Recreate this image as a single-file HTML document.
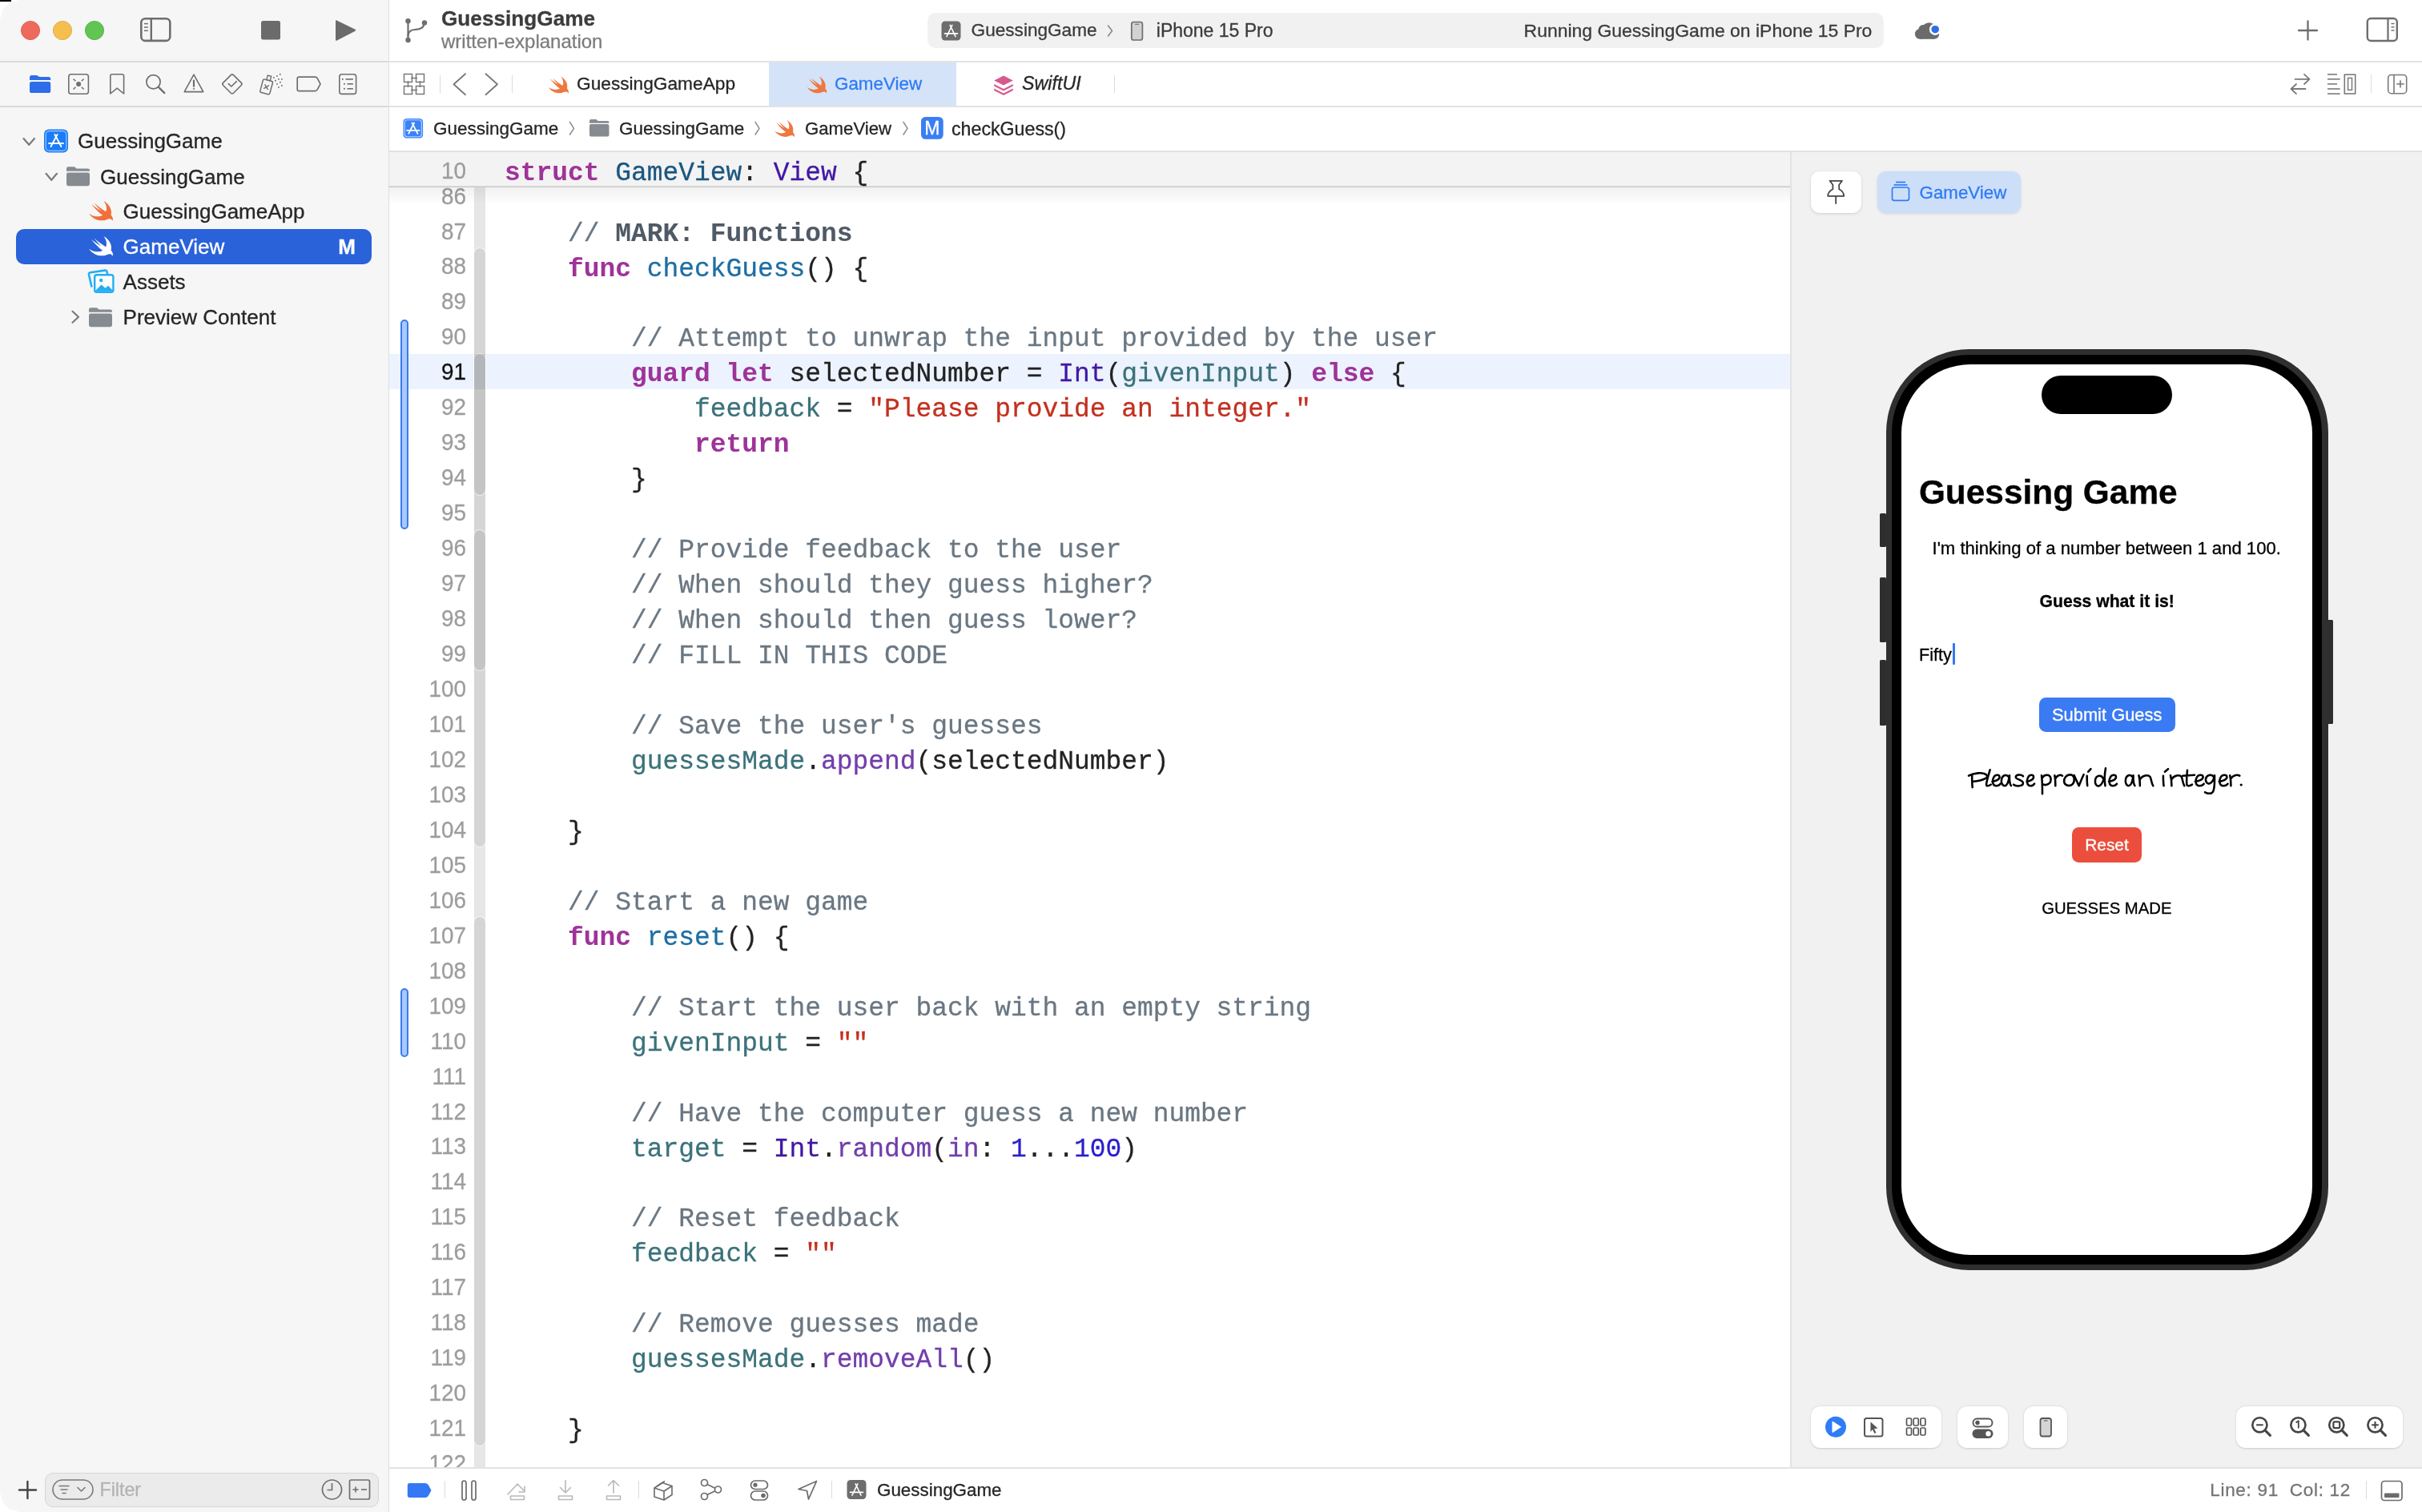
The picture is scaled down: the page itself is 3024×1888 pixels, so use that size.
<!DOCTYPE html><html><head><meta charset="utf-8"><style>
html,body{margin:0;padding:0;}
body{width:3024px;height:1888px;overflow:hidden;position:relative;background:#fff;font-family:"Liberation Sans",sans-serif;}
.t{position:absolute;white-space:pre;-webkit-text-stroke:0.3px currentColor;}
.r{position:absolute;}
svg.r{overflow:visible;}
</style></head><body><div style="position:absolute;left:0;top:0;width:3024px;height:1888px;overflow:hidden;background:#fff;will-change:transform">
<div class="r" style="left:0px;top:0px;width:486px;height:1888px;background:#f6f6f6;border-radius:0px;"></div>
<div class="r" style="left:484.5px;top:0px;width:1.5px;height:1888px;background:#dedede;border-radius:0px;"></div>
<div class="r" style="left:0px;top:76px;width:484.5px;height:2px;background:#dadada;border-radius:0px;"></div>
<div class="r" style="left:0px;top:132px;width:484.5px;height:2px;background:#dadada;border-radius:0px;"></div>
<div class="r" style="left:486px;top:76px;width:2538px;height:2px;background:#e3e3e3;border-radius:0px;"></div>
<div class="r" style="left:486px;top:132px;width:2538px;height:2px;background:#e3e3e3;border-radius:0px;"></div>
<div class="r" style="left:486px;top:188px;width:2538px;height:2px;background:#e1e1e1;border-radius:0px;"></div>
<div class="r" style="left:2236px;top:190px;width:788px;height:1642px;background:#f1f1f1;border-radius:0px;"></div>
<div class="r" style="left:2235px;top:190px;width:2px;height:1642px;background:#e3e3e3;border-radius:0px;"></div>
<div class="r" style="left:486px;top:1832px;width:2538px;height:2px;background:#e3e3e3;border-radius:0px;"></div>
<div style="position:absolute;left:486px;top:233px;width:1749px;height:1599px;overflow:hidden;background:#fff">
<div class="r" style="left:0px;top:208.84px;width:1749px;height:44px;background:#ecf3fe;border-radius:0px;"></div>
<div class="r" style="left:106px;top:0px;width:14px;height:1599px;background:#e6e6e6;border-radius:0px;"></div>
<div class="r" style="left:106px;top:77.0px;width:14px;height:747.3px;background:#d5d5d5;border-radius:7px;box-shadow:0 0 0 1px rgba(255,255,255,0.6);"></div>
<div class="r" style="left:106px;top:912.2px;width:14px;height:659.4px;background:#d5d5d5;border-radius:7px;box-shadow:0 0 0 1px rgba(255,255,255,0.6);"></div>
<div class="r" style="left:106px;top:208.8px;width:14px;height:175.8px;background:#c5c5c5;border-radius:7px;box-shadow:0 0 0 1px rgba(255,255,255,0.6);"></div>
<div class="r" style="left:106px;top:428.6px;width:14px;height:175.8px;background:#c5c5c5;border-radius:7px;box-shadow:0 0 0 1px rgba(255,255,255,0.6);"></div>
<div class="r" style="left:106px;top:208.84px;width:14px;height:44px;background:rgba(120,135,160,0.22);border-radius:0px;"></div>
<div class="r" style="left:14px;top:165.9px;width:10px;height:261.8px;background:#a9c8fb;border-radius:5px;box-sizing:border-box;border:2px solid #3a7af2;"></div>
<div class="r" style="left:14px;top:1001.1px;width:10px;height:85.9px;background:#a9c8fb;border-radius:5px;box-sizing:border-box;border:2px solid #3a7af2;"></div>
<div class="t" style="top:-3.46px;font-family:'Liberation Sans', sans-serif;font-size:30px;line-height:30px;color:#9d9d9d;font-weight:400;font-style:normal;transform:scaleX(0.93);transform-origin:100% 50%;left:-1904.00px;width:2000px;text-align:right;">86</div>
<div class="t" style="top:40.50px;font-family:'Liberation Sans', sans-serif;font-size:30px;line-height:30px;color:#9d9d9d;font-weight:400;font-style:normal;transform:scaleX(0.93);transform-origin:100% 50%;left:-1904.00px;width:2000px;text-align:right;">87</div>
<div class="t" style="top:43.59px;font-family:'Liberation Mono', monospace;font-size:32.91px;line-height:32.91px;color:#222222;font-weight:400;font-style:normal;left:144.00px;">    <span style="color:#6a7782">// </span><b style="color:#4f5a65;font-weight:700;-webkit-text-stroke:0.05px #4f5a65">MARK: Functions</b></div>
<div class="t" style="top:84.46px;font-family:'Liberation Sans', sans-serif;font-size:30px;line-height:30px;color:#9d9d9d;font-weight:400;font-style:normal;transform:scaleX(0.93);transform-origin:100% 50%;left:-1904.00px;width:2000px;text-align:right;">88</div>
<div class="t" style="top:87.55px;font-family:'Liberation Mono', monospace;font-size:32.91px;line-height:32.91px;color:#222222;font-weight:400;font-style:normal;left:144.00px;">    <b style="color:#9e3399;font-weight:700;-webkit-text-stroke:0.05px #9e3399">func</b> <span style="color:#1e6ea3">checkGuess</span><span style="color:#222222">() {</span></div>
<div class="t" style="top:128.42px;font-family:'Liberation Sans', sans-serif;font-size:30px;line-height:30px;color:#9d9d9d;font-weight:400;font-style:normal;transform:scaleX(0.93);transform-origin:100% 50%;left:-1904.00px;width:2000px;text-align:right;">89</div>
<div class="t" style="top:172.38px;font-family:'Liberation Sans', sans-serif;font-size:30px;line-height:30px;color:#9d9d9d;font-weight:400;font-style:normal;transform:scaleX(0.93);transform-origin:100% 50%;left:-1904.00px;width:2000px;text-align:right;">90</div>
<div class="t" style="top:175.47px;font-family:'Liberation Mono', monospace;font-size:32.91px;line-height:32.91px;color:#222222;font-weight:400;font-style:normal;left:144.00px;">        <span style="color:#6a7782">// Attempt to unwrap the input provided by the user</span></div>
<div class="t" style="top:216.34px;font-family:'Liberation Sans', sans-serif;font-size:30px;line-height:30px;color:#111;font-weight:400;font-style:normal;transform:scaleX(0.93);transform-origin:100% 50%;left:-1904.00px;width:2000px;text-align:right;">91</div>
<div class="t" style="top:219.43px;font-family:'Liberation Mono', monospace;font-size:32.91px;line-height:32.91px;color:#222222;font-weight:400;font-style:normal;left:144.00px;">        <b style="color:#9e3399;font-weight:700;-webkit-text-stroke:0.05px #9e3399">guard</b> <b style="color:#9e3399;font-weight:700;-webkit-text-stroke:0.05px #9e3399">let</b><span style="color:#222222"> selectedNumber = </span><span style="color:#4217a4">Int</span><span style="color:#222222">(</span><span style="color:#3b727a">givenInput</span><span style="color:#222222">) </span><b style="color:#9e3399;font-weight:700;-webkit-text-stroke:0.05px #9e3399">else</b><span style="color:#222222"> {</span></div>
<div class="t" style="top:260.30px;font-family:'Liberation Sans', sans-serif;font-size:30px;line-height:30px;color:#9d9d9d;font-weight:400;font-style:normal;transform:scaleX(0.93);transform-origin:100% 50%;left:-1904.00px;width:2000px;text-align:right;">92</div>
<div class="t" style="top:263.39px;font-family:'Liberation Mono', monospace;font-size:32.91px;line-height:32.91px;color:#222222;font-weight:400;font-style:normal;left:144.00px;">            <span style="color:#3b727a">feedback</span><span style="color:#222222"> = </span><span style="color:#c4301f">&quot;Please provide an integer.&quot;</span></div>
<div class="t" style="top:304.26px;font-family:'Liberation Sans', sans-serif;font-size:30px;line-height:30px;color:#9d9d9d;font-weight:400;font-style:normal;transform:scaleX(0.93);transform-origin:100% 50%;left:-1904.00px;width:2000px;text-align:right;">93</div>
<div class="t" style="top:307.35px;font-family:'Liberation Mono', monospace;font-size:32.91px;line-height:32.91px;color:#222222;font-weight:400;font-style:normal;left:144.00px;">            <b style="color:#9e3399;font-weight:700;-webkit-text-stroke:0.05px #9e3399">return</b></div>
<div class="t" style="top:348.22px;font-family:'Liberation Sans', sans-serif;font-size:30px;line-height:30px;color:#9d9d9d;font-weight:400;font-style:normal;transform:scaleX(0.93);transform-origin:100% 50%;left:-1904.00px;width:2000px;text-align:right;">94</div>
<div class="t" style="top:351.31px;font-family:'Liberation Mono', monospace;font-size:32.91px;line-height:32.91px;color:#222222;font-weight:400;font-style:normal;left:144.00px;">        <span style="color:#222222">}</span></div>
<div class="t" style="top:392.18px;font-family:'Liberation Sans', sans-serif;font-size:30px;line-height:30px;color:#9d9d9d;font-weight:400;font-style:normal;transform:scaleX(0.93);transform-origin:100% 50%;left:-1904.00px;width:2000px;text-align:right;">95</div>
<div class="t" style="top:436.14px;font-family:'Liberation Sans', sans-serif;font-size:30px;line-height:30px;color:#9d9d9d;font-weight:400;font-style:normal;transform:scaleX(0.93);transform-origin:100% 50%;left:-1904.00px;width:2000px;text-align:right;">96</div>
<div class="t" style="top:439.23px;font-family:'Liberation Mono', monospace;font-size:32.91px;line-height:32.91px;color:#222222;font-weight:400;font-style:normal;left:144.00px;">        <span style="color:#6a7782">// Provide feedback to the user</span></div>
<div class="t" style="top:480.10px;font-family:'Liberation Sans', sans-serif;font-size:30px;line-height:30px;color:#9d9d9d;font-weight:400;font-style:normal;transform:scaleX(0.93);transform-origin:100% 50%;left:-1904.00px;width:2000px;text-align:right;">97</div>
<div class="t" style="top:483.19px;font-family:'Liberation Mono', monospace;font-size:32.91px;line-height:32.91px;color:#222222;font-weight:400;font-style:normal;left:144.00px;">        <span style="color:#6a7782">// When should they guess higher?</span></div>
<div class="t" style="top:524.06px;font-family:'Liberation Sans', sans-serif;font-size:30px;line-height:30px;color:#9d9d9d;font-weight:400;font-style:normal;transform:scaleX(0.93);transform-origin:100% 50%;left:-1904.00px;width:2000px;text-align:right;">98</div>
<div class="t" style="top:527.15px;font-family:'Liberation Mono', monospace;font-size:32.91px;line-height:32.91px;color:#222222;font-weight:400;font-style:normal;left:144.00px;">        <span style="color:#6a7782">// When should then guess lower?</span></div>
<div class="t" style="top:568.02px;font-family:'Liberation Sans', sans-serif;font-size:30px;line-height:30px;color:#9d9d9d;font-weight:400;font-style:normal;transform:scaleX(0.93);transform-origin:100% 50%;left:-1904.00px;width:2000px;text-align:right;">99</div>
<div class="t" style="top:571.11px;font-family:'Liberation Mono', monospace;font-size:32.91px;line-height:32.91px;color:#222222;font-weight:400;font-style:normal;left:144.00px;">        <span style="color:#6a7782">// FILL IN THIS CODE</span></div>
<div class="t" style="top:611.98px;font-family:'Liberation Sans', sans-serif;font-size:30px;line-height:30px;color:#9d9d9d;font-weight:400;font-style:normal;transform:scaleX(0.93);transform-origin:100% 50%;left:-1904.00px;width:2000px;text-align:right;">100</div>
<div class="t" style="top:655.94px;font-family:'Liberation Sans', sans-serif;font-size:30px;line-height:30px;color:#9d9d9d;font-weight:400;font-style:normal;transform:scaleX(0.93);transform-origin:100% 50%;left:-1904.00px;width:2000px;text-align:right;">101</div>
<div class="t" style="top:659.03px;font-family:'Liberation Mono', monospace;font-size:32.91px;line-height:32.91px;color:#222222;font-weight:400;font-style:normal;left:144.00px;">        <span style="color:#6a7782">// Save the user&#x27;s guesses</span></div>
<div class="t" style="top:699.90px;font-family:'Liberation Sans', sans-serif;font-size:30px;line-height:30px;color:#9d9d9d;font-weight:400;font-style:normal;transform:scaleX(0.93);transform-origin:100% 50%;left:-1904.00px;width:2000px;text-align:right;">102</div>
<div class="t" style="top:702.99px;font-family:'Liberation Mono', monospace;font-size:32.91px;line-height:32.91px;color:#222222;font-weight:400;font-style:normal;left:144.00px;">        <span style="color:#3b727a">guessesMade</span><span style="color:#222222">.</span><span style="color:#723eac">append</span><span style="color:#222222">(selectedNumber)</span></div>
<div class="t" style="top:743.86px;font-family:'Liberation Sans', sans-serif;font-size:30px;line-height:30px;color:#9d9d9d;font-weight:400;font-style:normal;transform:scaleX(0.93);transform-origin:100% 50%;left:-1904.00px;width:2000px;text-align:right;">103</div>
<div class="t" style="top:787.82px;font-family:'Liberation Sans', sans-serif;font-size:30px;line-height:30px;color:#9d9d9d;font-weight:400;font-style:normal;transform:scaleX(0.93);transform-origin:100% 50%;left:-1904.00px;width:2000px;text-align:right;">104</div>
<div class="t" style="top:790.91px;font-family:'Liberation Mono', monospace;font-size:32.91px;line-height:32.91px;color:#222222;font-weight:400;font-style:normal;left:144.00px;">    <span style="color:#222222">}</span></div>
<div class="t" style="top:831.78px;font-family:'Liberation Sans', sans-serif;font-size:30px;line-height:30px;color:#9d9d9d;font-weight:400;font-style:normal;transform:scaleX(0.93);transform-origin:100% 50%;left:-1904.00px;width:2000px;text-align:right;">105</div>
<div class="t" style="top:875.74px;font-family:'Liberation Sans', sans-serif;font-size:30px;line-height:30px;color:#9d9d9d;font-weight:400;font-style:normal;transform:scaleX(0.93);transform-origin:100% 50%;left:-1904.00px;width:2000px;text-align:right;">106</div>
<div class="t" style="top:878.83px;font-family:'Liberation Mono', monospace;font-size:32.91px;line-height:32.91px;color:#222222;font-weight:400;font-style:normal;left:144.00px;">    <span style="color:#6a7782">// Start a new game</span></div>
<div class="t" style="top:919.70px;font-family:'Liberation Sans', sans-serif;font-size:30px;line-height:30px;color:#9d9d9d;font-weight:400;font-style:normal;transform:scaleX(0.93);transform-origin:100% 50%;left:-1904.00px;width:2000px;text-align:right;">107</div>
<div class="t" style="top:922.79px;font-family:'Liberation Mono', monospace;font-size:32.91px;line-height:32.91px;color:#222222;font-weight:400;font-style:normal;left:144.00px;">    <b style="color:#9e3399;font-weight:700;-webkit-text-stroke:0.05px #9e3399">func</b> <span style="color:#1e6ea3">reset</span><span style="color:#222222">() {</span></div>
<div class="t" style="top:963.66px;font-family:'Liberation Sans', sans-serif;font-size:30px;line-height:30px;color:#9d9d9d;font-weight:400;font-style:normal;transform:scaleX(0.93);transform-origin:100% 50%;left:-1904.00px;width:2000px;text-align:right;">108</div>
<div class="t" style="top:1007.62px;font-family:'Liberation Sans', sans-serif;font-size:30px;line-height:30px;color:#9d9d9d;font-weight:400;font-style:normal;transform:scaleX(0.93);transform-origin:100% 50%;left:-1904.00px;width:2000px;text-align:right;">109</div>
<div class="t" style="top:1010.71px;font-family:'Liberation Mono', monospace;font-size:32.91px;line-height:32.91px;color:#222222;font-weight:400;font-style:normal;left:144.00px;">        <span style="color:#6a7782">// Start the user back with an empty string</span></div>
<div class="t" style="top:1051.58px;font-family:'Liberation Sans', sans-serif;font-size:30px;line-height:30px;color:#9d9d9d;font-weight:400;font-style:normal;transform:scaleX(0.93);transform-origin:100% 50%;left:-1904.00px;width:2000px;text-align:right;">110</div>
<div class="t" style="top:1054.67px;font-family:'Liberation Mono', monospace;font-size:32.91px;line-height:32.91px;color:#222222;font-weight:400;font-style:normal;left:144.00px;">        <span style="color:#3b727a">givenInput</span><span style="color:#222222"> = </span><span style="color:#c4301f">&quot;&quot;</span></div>
<div class="t" style="top:1095.54px;font-family:'Liberation Sans', sans-serif;font-size:30px;line-height:30px;color:#9d9d9d;font-weight:400;font-style:normal;transform:scaleX(0.93);transform-origin:100% 50%;left:-1904.00px;width:2000px;text-align:right;">111</div>
<div class="t" style="top:1139.50px;font-family:'Liberation Sans', sans-serif;font-size:30px;line-height:30px;color:#9d9d9d;font-weight:400;font-style:normal;transform:scaleX(0.93);transform-origin:100% 50%;left:-1904.00px;width:2000px;text-align:right;">112</div>
<div class="t" style="top:1142.59px;font-family:'Liberation Mono', monospace;font-size:32.91px;line-height:32.91px;color:#222222;font-weight:400;font-style:normal;left:144.00px;">        <span style="color:#6a7782">// Have the computer guess a new number</span></div>
<div class="t" style="top:1183.46px;font-family:'Liberation Sans', sans-serif;font-size:30px;line-height:30px;color:#9d9d9d;font-weight:400;font-style:normal;transform:scaleX(0.93);transform-origin:100% 50%;left:-1904.00px;width:2000px;text-align:right;">113</div>
<div class="t" style="top:1186.55px;font-family:'Liberation Mono', monospace;font-size:32.91px;line-height:32.91px;color:#222222;font-weight:400;font-style:normal;left:144.00px;">        <span style="color:#3b727a">target</span><span style="color:#222222"> = </span><span style="color:#4217a4">Int</span><span style="color:#222222">.</span><span style="color:#723eac">random</span><span style="color:#222222">(</span><span style="color:#723eac">in</span><span style="color:#222222">: </span><span style="color:#2a1fd0">1</span><span style="color:#222222">...</span><span style="color:#2a1fd0">100</span><span style="color:#222222">)</span></div>
<div class="t" style="top:1227.42px;font-family:'Liberation Sans', sans-serif;font-size:30px;line-height:30px;color:#9d9d9d;font-weight:400;font-style:normal;transform:scaleX(0.93);transform-origin:100% 50%;left:-1904.00px;width:2000px;text-align:right;">114</div>
<div class="t" style="top:1271.38px;font-family:'Liberation Sans', sans-serif;font-size:30px;line-height:30px;color:#9d9d9d;font-weight:400;font-style:normal;transform:scaleX(0.93);transform-origin:100% 50%;left:-1904.00px;width:2000px;text-align:right;">115</div>
<div class="t" style="top:1274.47px;font-family:'Liberation Mono', monospace;font-size:32.91px;line-height:32.91px;color:#222222;font-weight:400;font-style:normal;left:144.00px;">        <span style="color:#6a7782">// Reset feedback</span></div>
<div class="t" style="top:1315.34px;font-family:'Liberation Sans', sans-serif;font-size:30px;line-height:30px;color:#9d9d9d;font-weight:400;font-style:normal;transform:scaleX(0.93);transform-origin:100% 50%;left:-1904.00px;width:2000px;text-align:right;">116</div>
<div class="t" style="top:1318.43px;font-family:'Liberation Mono', monospace;font-size:32.91px;line-height:32.91px;color:#222222;font-weight:400;font-style:normal;left:144.00px;">        <span style="color:#3b727a">feedback</span><span style="color:#222222"> = </span><span style="color:#c4301f">&quot;&quot;</span></div>
<div class="t" style="top:1359.30px;font-family:'Liberation Sans', sans-serif;font-size:30px;line-height:30px;color:#9d9d9d;font-weight:400;font-style:normal;transform:scaleX(0.93);transform-origin:100% 50%;left:-1904.00px;width:2000px;text-align:right;">117</div>
<div class="t" style="top:1403.26px;font-family:'Liberation Sans', sans-serif;font-size:30px;line-height:30px;color:#9d9d9d;font-weight:400;font-style:normal;transform:scaleX(0.93);transform-origin:100% 50%;left:-1904.00px;width:2000px;text-align:right;">118</div>
<div class="t" style="top:1406.35px;font-family:'Liberation Mono', monospace;font-size:32.91px;line-height:32.91px;color:#222222;font-weight:400;font-style:normal;left:144.00px;">        <span style="color:#6a7782">// Remove guesses made</span></div>
<div class="t" style="top:1447.22px;font-family:'Liberation Sans', sans-serif;font-size:30px;line-height:30px;color:#9d9d9d;font-weight:400;font-style:normal;transform:scaleX(0.93);transform-origin:100% 50%;left:-1904.00px;width:2000px;text-align:right;">119</div>
<div class="t" style="top:1450.31px;font-family:'Liberation Mono', monospace;font-size:32.91px;line-height:32.91px;color:#222222;font-weight:400;font-style:normal;left:144.00px;">        <span style="color:#3b727a">guessesMade</span><span style="color:#222222">.</span><span style="color:#723eac">removeAll</span><span style="color:#222222">()</span></div>
<div class="t" style="top:1491.18px;font-family:'Liberation Sans', sans-serif;font-size:30px;line-height:30px;color:#9d9d9d;font-weight:400;font-style:normal;transform:scaleX(0.93);transform-origin:100% 50%;left:-1904.00px;width:2000px;text-align:right;">120</div>
<div class="t" style="top:1535.14px;font-family:'Liberation Sans', sans-serif;font-size:30px;line-height:30px;color:#9d9d9d;font-weight:400;font-style:normal;transform:scaleX(0.93);transform-origin:100% 50%;left:-1904.00px;width:2000px;text-align:right;">121</div>
<div class="t" style="top:1538.23px;font-family:'Liberation Mono', monospace;font-size:32.91px;line-height:32.91px;color:#222222;font-weight:400;font-style:normal;left:144.00px;">    <span style="color:#222222">}</span></div>
<div class="t" style="top:1579.10px;font-family:'Liberation Sans', sans-serif;font-size:30px;line-height:30px;color:#9d9d9d;font-weight:400;font-style:normal;transform:scaleX(0.93);transform-origin:100% 50%;left:-1904.00px;width:2000px;text-align:right;">122</div>
</div>
<div class="r" style="left:486px;top:190px;width:1749px;height:42px;background:#f3f3f3;border-radius:0px;"></div>
<div class="r" style="left:486px;top:232px;width:1749px;height:1.5px;background:#d8d8d8;border-radius:0px;"></div>
<div class="r" style="left:486px;top:233px;width:1749px;height:22px;background:linear-gradient(rgba(0,0,0,0.06),rgba(0,0,0,0))"></div>
<div class="t" style="top:198.00px;font-family:'Liberation Sans', sans-serif;font-size:30px;line-height:30px;color:#9d9d9d;font-weight:400;font-style:normal;transform:scaleX(0.93);transform-origin:100% 50%;left:-1418.00px;width:2000px;text-align:right;">10</div>
<div class="t" style="top:200.59px;font-family:'Liberation Mono', monospace;font-size:32.91px;line-height:32.91px;color:#222222;font-weight:400;font-style:normal;left:630.00px;"><b style="color:#9e3399;font-weight:700;-webkit-text-stroke:0.05px #9e3399">struct</b> <span style="color:#1b5680">GameView</span><span style="color:#222222">: </span><span style="color:#4217a4">View</span><span style="color:#222222"> {</span></div>
<div class="r" style="left:20px;top:286px;width:444px;height:44px;background:#2962d9;border-radius:10px;"></div>
<div class="t" style="top:207.50px;font-family:'Liberation Sans', sans-serif;font-size:26px;line-height:26px;color:#262626;font-weight:400;font-style:normal;left:125.00px;">GuessingGame</div>
<div class="t" style="top:162.90px;font-family:'Liberation Sans', sans-serif;font-size:26px;line-height:26px;color:#262626;font-weight:400;font-style:normal;left:97.00px;">GuessingGame</div>
<div class="t" style="top:250.90px;font-family:'Liberation Sans', sans-serif;font-size:26px;line-height:26px;color:#262626;font-weight:400;font-style:normal;left:153.60px;">GuessingGameApp</div>
<div class="t" style="top:294.70px;font-family:'Liberation Sans', sans-serif;font-size:26px;line-height:26px;color:#ffffff;font-weight:400;font-style:normal;left:153.60px;">GameView</div>
<div class="t" style="top:294.70px;font-family:'Liberation Sans', sans-serif;font-size:26px;line-height:26px;color:#ffffff;font-weight:700;font-style:normal;left:-1556.00px;width:2000px;text-align:right;">M</div>
<div class="t" style="top:338.70px;font-family:'Liberation Sans', sans-serif;font-size:26px;line-height:26px;color:#262626;font-weight:400;font-style:normal;left:153.60px;">Assets</div>
<div class="t" style="top:382.90px;font-family:'Liberation Sans', sans-serif;font-size:26px;line-height:26px;color:#262626;font-weight:400;font-style:normal;left:153.60px;">Preview Content</div>
<div class="t" style="top:9.73px;font-family:'Liberation Sans', sans-serif;font-size:26.2px;line-height:26.2px;color:#3c3c3c;font-weight:700;font-style:normal;left:551.00px;">GuessingGame</div>
<div class="t" style="top:40.00px;font-family:'Liberation Sans', sans-serif;font-size:24px;line-height:24px;color:#7d7d7d;font-weight:400;font-style:normal;left:551.00px;">written-explanation</div>
<div class="r" style="left:1158px;top:16px;width:1194px;height:44px;background:#f1f1f1;border-radius:10px;"></div>
<div class="t" style="top:26.99px;font-family:'Liberation Sans', sans-serif;font-size:22.6px;line-height:22.6px;color:#3b3b3b;font-weight:400;font-style:normal;left:1212.60px;">GuessingGame</div>
<div class="t" style="top:26.65px;font-family:'Liberation Sans', sans-serif;font-size:23px;line-height:23px;color:#3b3b3b;font-weight:400;font-style:normal;left:1443.80px;">iPhone 15 Pro</div>
<div class="t" style="top:26.69px;font-family:'Liberation Sans', sans-serif;font-size:22.95px;line-height:22.95px;color:#3b3b3b;font-weight:400;font-style:normal;left:337.40px;width:2000px;text-align:right;">Running GuessingGame on iPhone 15 Pro</div>
<div class="r" style="left:548.5px;top:94px;width:1px;height:23px;background:#dcdcdc;border-radius:0px;"></div>
<div class="r" style="left:638.5px;top:94px;width:1px;height:22px;background:#dcdcdc;border-radius:0px;"></div>
<div class="r" style="left:960px;top:78px;width:234px;height:54px;background:#d4e3f8;border-radius:0px;"></div>
<div class="t" style="top:93.41px;font-family:'Liberation Sans', sans-serif;font-size:22.7px;line-height:22.7px;color:#262626;font-weight:400;font-style:normal;left:720.00px;">GuessingGameApp</div>
<div class="t" style="top:93.66px;font-family:'Liberation Sans', sans-serif;font-size:22.4px;line-height:22.4px;color:#2f7bf5;font-weight:400;font-style:normal;left:1042.00px;">GameView</div>
<div class="t" style="top:92.90px;font-family:'Liberation Sans', sans-serif;font-size:23.3px;line-height:23.3px;color:#262626;font-weight:400;font-style:italic;left:1276.00px;">SwiftUI</div>
<div class="r" style="left:1390.5px;top:94px;width:1px;height:22px;background:#dcdcdc;border-radius:0px;"></div>
<div class="r" style="left:2960.3px;top:93.3px;width:1.2px;height:23.2px;background:#dedede;border-radius:0px;"></div>
<div class="t" style="top:150.18px;font-family:'Liberation Sans', sans-serif;font-size:22.5px;line-height:22.5px;color:#262626;font-weight:400;font-style:normal;left:541.00px;">GuessingGame</div>
<div class="t" style="top:150.18px;font-family:'Liberation Sans', sans-serif;font-size:22.5px;line-height:22.5px;color:#262626;font-weight:400;font-style:normal;left:773.00px;">GuessingGame</div>
<div class="t" style="top:150.43px;font-family:'Liberation Sans', sans-serif;font-size:22.2px;line-height:22.2px;color:#262626;font-weight:400;font-style:normal;left:1005.00px;">GameView</div>
<div class="t" style="top:149.58px;font-family:'Liberation Sans', sans-serif;font-size:23.2px;line-height:23.2px;color:#262626;font-weight:400;font-style:normal;left:1188.00px;">checkGuess()</div>
<div class="r" style="left:2261px;top:213.5px;width:63px;height:52px;background:#ffffff;border-radius:11px;box-shadow:0 1px 3.5px rgba(0,0,0,0.15);"></div>
<div class="r" style="left:2344px;top:213.5px;width:179px;height:52px;background:#cddff8;border-radius:11px;box-shadow:0 1px 3.5px rgba(0,0,0,0.12);"></div>
<div class="t" style="top:229.64px;font-family:'Liberation Sans', sans-serif;font-size:22.3px;line-height:22.3px;color:#2f7bf5;font-weight:400;font-style:normal;left:2396.60px;">GameView</div>
<div class="r" style="left:2347.3px;top:641.2px;width:7.5px;height:42px;background:#2e2e2e;border-radius:1.5px;"></div>
<div class="r" style="left:2347.3px;top:720.8px;width:7.5px;height:81.7px;background:#2e2e2e;border-radius:1.5px;"></div>
<div class="r" style="left:2347.3px;top:824px;width:7.5px;height:82px;background:#2e2e2e;border-radius:1.5px;"></div>
<div class="r" style="left:2906px;top:774.4px;width:6.5px;height:130px;background:#2e2e2e;border-radius:1.5px;"></div>
<div class="r" style="left:2354.5px;top:436px;width:552px;height:1150px;background:#2f2f2f;border-radius:104px;"></div>
<div class="r" style="left:2361.8px;top:442.6px;width:537.4px;height:1136.4px;background:#000000;border-radius:97px;"></div>
<div class="r" style="left:2373.6px;top:455px;width:513.3px;height:1112px;background:#ffffff;border-radius:86px;"></div>
<div class="r" style="left:2548.7px;top:469.4px;width:163px;height:48px;background:#000000;border-radius:24px;"></div>
<div class="t" style="top:593.76px;font-family:'Liberation Sans', sans-serif;font-size:42.4px;line-height:42.4px;color:#000;font-weight:700;font-style:normal;left:2395.90px;">Guessing Game</div>
<div class="t" style="top:673.92px;font-family:'Liberation Sans', sans-serif;font-size:22.1px;line-height:22.1px;color:#000;font-weight:400;font-style:normal;left:1630.20px;width:2000px;text-align:center;">I&#x27;m thinking of a number between 1 and 100.</div>
<div class="t" style="top:739.98px;font-family:'Liberation Sans', sans-serif;font-size:21.2px;line-height:21.2px;color:#000;font-weight:700;font-style:normal;left:1630.70px;width:2000px;text-align:center;">Guess what it is!</div>
<div class="t" style="top:806.55px;font-family:'Liberation Sans', sans-serif;font-size:21.7px;line-height:21.7px;color:#000;font-weight:400;font-style:normal;left:2396.00px;">Fifty</div>
<div class="r" style="left:2438.3px;top:802.8px;width:2.6px;height:27.5px;background:#3478f6;border-radius:1px;"></div>
<div class="r" style="left:2546px;top:870.8px;width:169.5px;height:43.7px;background:#3a7bf3;border-radius:8.5px;"></div>
<div class="t" style="top:882.38px;font-family:'Liberation Sans', sans-serif;font-size:21.9px;line-height:21.9px;color:#ffffff;font-weight:400;font-style:normal;left:1630.70px;width:2000px;text-align:center;">Submit Guess</div>
<div class="r" style="left:2586.6px;top:1032.5px;width:87.8px;height:44.5px;background:#eb4e3d;border-radius:8.5px;"></div>
<div class="t" style="top:1045.23px;font-family:'Liberation Sans', sans-serif;font-size:20.9px;line-height:20.9px;color:#ffffff;font-weight:400;font-style:normal;left:1630.50px;width:2000px;text-align:center;">Reset</div>
<div class="t" style="top:1124.34px;font-family:'Liberation Sans', sans-serif;font-size:20.3px;line-height:20.3px;color:#000;font-weight:400;font-style:normal;left:1630.30px;width:2000px;text-align:center;">GUESSES MADE</div>
<div class="r" style="left:2261px;top:1756px;width:163px;height:52px;background:#ffffff;border-radius:12px;box-shadow:0 0.5px 2.5px rgba(0,0,0,0.16);"></div>
<div class="r" style="left:2444.3px;top:1756px;width:62.7px;height:52px;background:#ffffff;border-radius:12px;box-shadow:0 0.5px 2.5px rgba(0,0,0,0.16);"></div>
<div class="r" style="left:2527.3px;top:1756px;width:53.7px;height:52px;background:#ffffff;border-radius:12px;box-shadow:0 0.5px 2.5px rgba(0,0,0,0.16);"></div>
<div class="r" style="left:2792px;top:1756px;width:208.3px;height:52px;background:#ffffff;border-radius:12px;box-shadow:0 0.5px 2.5px rgba(0,0,0,0.16);"></div>
<div class="r" style="left:56.4px;top:1838.5px;width:417px;height:43px;background:#ebebeb;border-radius:10px;box-sizing:border-box;border:1px solid #d6d6d6;"></div>
<div class="t" style="top:1849.28px;font-family:'Liberation Sans', sans-serif;font-size:23.2px;line-height:23.2px;color:#b3b3b3;font-weight:400;font-style:normal;left:124.50px;">Filter</div>
<div class="r" style="left:555.3px;top:1849px;width:1px;height:22px;background:#dcdcdc;border-radius:0px;"></div>
<div class="r" style="left:796.5px;top:1849px;width:1px;height:22px;background:#dcdcdc;border-radius:0px;"></div>
<div class="r" style="left:1038.3px;top:1849px;width:1px;height:22px;background:#dcdcdc;border-radius:0px;"></div>
<div class="t" style="top:1849.96px;font-family:'Liberation Sans', sans-serif;font-size:22.4px;line-height:22.4px;color:#262626;font-weight:400;font-style:normal;left:1095.00px;">GuessingGame</div>
<div class="t" style="top:1850.47px;font-family:'Liberation Sans', sans-serif;font-size:22.5px;line-height:22.5px;color:#747474;font-weight:400;font-style:normal;letter-spacing:0.7px;left:935.00px;width:2000px;text-align:right;">Line: 91  Col: 12</div>
<div class="r" style="left:2954.3px;top:1849px;width:1px;height:23px;background:#dcdcdc;border-radius:0px;"></div>
<svg class="r" style="left:0;top:0;pointer-events:none" width="3024" height="1888" viewBox="0 0 3024 1888"><circle cx="38" cy="38" r="11.6" fill="#ee6a5e" stroke="#d9564b" stroke-width="0.8"/><circle cx="78" cy="38" r="11.6" fill="#f5bf4f" stroke="#dba43f" stroke-width="0.8"/><circle cx="118" cy="38" r="11.6" fill="#61c554" stroke="#4fa93f" stroke-width="0.8"/><rect x="176.3" y="23.3" width="36" height="27.6" rx="5" fill="none" stroke="#6e6e6e" stroke-width="2.6"/><line x1="188.8" y1="23.5" x2="188.8" y2="50.5" stroke="#6e6e6e" stroke-width="2.4"/><line x1="180" y1="29.6" x2="184.8" y2="29.6" stroke="#6e6e6e" stroke-width="1.5"/><line x1="180" y1="34" x2="184.8" y2="34" stroke="#6e6e6e" stroke-width="1.5"/><line x1="180" y1="38.3" x2="184.8" y2="38.3" stroke="#6e6e6e" stroke-width="1.5"/><rect x="326" y="26" width="24" height="23.5" rx="2.5" fill="#6b6b6b"/><path d="M420.5 25.5 Q419 24.5 419 26.5 V49.5 Q419 51.5 420.8 50.5 L443.5 38.8 Q445 37.8 443.5 36.8 Z" fill="#6b6b6b"/><path d="M37 100 V96.5 Q37 94 39.5 94 H45 Q46.5 94 47.8 95.2 Q48.6 96 50 96 H60.7 Q63.2 96 63.2 98.5 V100 Z" fill="#2e6de8"/><rect x="37" y="102" width="26.2" height="14" rx="2.6" fill="#2e6de8"/><rect x="85.8" y="92.8" width="24.6" height="24.4" rx="3" fill="none" stroke="#6f6f6f" stroke-width="1.6"/><circle cx="98.1" cy="105" r="3" fill="#6f6f6f"/><line x1="91.6" y1="98.5" x2="94.4" y2="101.3" stroke="#6f6f6f" stroke-width="1.5"/><line x1="104.6" y1="98.5" x2="101.8" y2="101.3" stroke="#6f6f6f" stroke-width="1.5"/><line x1="91.6" y1="111.5" x2="94.4" y2="108.7" stroke="#6f6f6f" stroke-width="1.5"/><line x1="104.6" y1="111.5" x2="101.8" y2="108.7" stroke="#6f6f6f" stroke-width="1.5"/><path d="M137.8 117 V95 Q137.8 92.8 140 92.8 H152.4 Q154.6 92.8 154.6 95 V117 L146.2 110.2 Z" fill="none" stroke="#6f6f6f" stroke-width="1.6" stroke-linejoin="round"/><circle cx="191.5" cy="102.3" r="8.6" fill="none" stroke="#6f6f6f" stroke-width="1.7"/><line x1="197.8" y1="108.6" x2="205.3" y2="116.1" stroke="#6f6f6f" stroke-width="2.3" stroke-linecap="round"/><path d="M242 93.2 L253.8 114.6 H230.2 Z" fill="none" stroke="#6f6f6f" stroke-width="1.6" stroke-linejoin="round"/><line x1="242" y1="100.5" x2="242" y2="107.8" stroke="#6f6f6f" stroke-width="2.2" stroke-linecap="round"/><circle cx="242" cy="111" r="1.1" fill="#6f6f6f"/><rect x="280.8" y="95.8" width="18.2" height="18.2" rx="2.2" transform="rotate(45 289.9 104.9)" fill="none" stroke="#6f6f6f" stroke-width="1.6"/><polyline points="285.3,104.6 288.8,108 295.3,101.6" fill="none" stroke="#6f6f6f" stroke-width="1.6" stroke-linecap="round" stroke-linejoin="round"/><g transform="rotate(15 333 108)"><rect x="326.5" y="100" width="12.5" height="17" rx="2" fill="none" stroke="#6f6f6f" stroke-width="1.5"/><rect x="330.6" y="94.2" width="4.6" height="5.8" fill="none" stroke="#6f6f6f" stroke-width="1.4"/><line x1="330" y1="106" x2="335.5" y2="111.5" stroke="#6f6f6f" stroke-width="1.4"/><line x1="335.5" y1="106" x2="330" y2="111.5" stroke="#6f6f6f" stroke-width="1.4"/></g><circle cx="349.8" cy="92.8" r="0.95" fill="#6f6f6f"/><circle cx="345.9" cy="94.9" r="0.95" fill="#6f6f6f"/><circle cx="341.9" cy="97" r="0.95" fill="#6f6f6f"/><circle cx="347.9" cy="98.9" r="0.95" fill="#6f6f6f"/><circle cx="351.9" cy="98.9" r="0.95" fill="#6f6f6f"/><circle cx="343.9" cy="100.8" r="0.95" fill="#6f6f6f"/><circle cx="349.9" cy="102.8" r="0.95" fill="#6f6f6f"/><circle cx="345.9" cy="104.9" r="0.95" fill="#6f6f6f"/><circle cx="351.9" cy="107" r="0.95" fill="#6f6f6f"/><circle cx="347.9" cy="108.9" r="0.95" fill="#6f6f6f"/><path d="M373.4 96.2 H393.5 Q395.2 96.2 396.2 97.7 L400 104.8 L396.2 111.9 Q395.2 113.6 393.5 113.6 H373.4 Q371.2 113.6 371.2 111.4 V98.4 Q371.2 96.2 373.4 96.2 Z" fill="none" stroke="#6f6f6f" stroke-width="1.7" stroke-linejoin="round"/><rect x="423.8" y="92.8" width="20.8" height="24.6" rx="3" fill="none" stroke="#6f6f6f" stroke-width="1.6"/><rect x="426.90000000000003" y="98.0" width="1.8" height="1.8" fill="#6f6f6f"/><line x1="431.4" y1="98.9" x2="440.9" y2="98.9" stroke="#6f6f6f" stroke-width="1.6"/><rect x="429.0" y="103.89999999999999" width="1.8" height="1.8" fill="#6f6f6f"/><line x1="433.5" y1="104.8" x2="440.9" y2="104.8" stroke="#6f6f6f" stroke-width="1.6"/><rect x="429.0" y="109.89999999999999" width="1.8" height="1.8" fill="#6f6f6f"/><line x1="433.5" y1="110.8" x2="440.9" y2="110.8" stroke="#6f6f6f" stroke-width="1.6"/><polyline points="29.5,173 36.2,180.8 43,173" fill="none" stroke="#7b7b7b" stroke-width="2.2" stroke-linecap="round" stroke-linejoin="round"/><polyline points="57.5,216.8 64.2,224.8 71,216.8" fill="none" stroke="#7b7b7b" stroke-width="2.2" stroke-linecap="round" stroke-linejoin="round"/><polyline points="90.5,388.8 98,395.8 90.5,402.8" fill="none" stroke="#7b7b7b" stroke-width="2.2" stroke-linecap="round" stroke-linejoin="round"/><rect x="55" y="161.5" width="30" height="29" rx="6.0" fill="#1b7cf5"/><rect x="57.2" y="163.7" width="25.6" height="24.6" rx="4.5" fill="none" stroke="#9cc8ff" stroke-width="1.2"/><path d="M68.4 168.0 L76.5 183.0 M71.6 168.0 L63.5 183.0 M61.0 179.0 H79.0" stroke="#fff" stroke-width="1.9" stroke-linecap="round" fill="none"/><path d="M83 213.7 V210.39999999999998 Q83 208.2 85.2 208.2 H92.0 Q93.5 208.2 94.5 209.39999999999998 L95.5 210.6 H109.8 Q112 210.6 112 212.79999999999998 V213.7 Z" fill="#868b92"/><rect x="83" y="215.39999999999998" width="29" height="16.8" rx="2.4" fill="#868b92"/><path d="M111 389.7 V386.4 Q111 384.2 113.2 384.2 H120.0 Q121.5 384.2 122.5 385.4 L123.5 386.59999999999997 H137.8 Q140 386.59999999999997 140 388.8 V389.7 Z" fill="#868b92"/><rect x="111" y="391.4" width="29" height="16.8" rx="2.4" fill="#868b92"/><g fill="none" stroke="#23aef3" stroke-width="2.6" stroke-linejoin="round"><path d="M114.5 358.5 L111 343 Q110.6 340.8 112.8 340.3 L131 337.6 Q133 337.3 133.5 339.4 L134.2 342"/></g><rect x="118.2" y="343.2" width="23.2" height="21.6" rx="2.6" fill="#fff" stroke="#23aef3" stroke-width="2.4"/><path d="M119.5 362.5 L126.5 355.5 L131.5 359.8 L135 356.8 L140.3 362 V363.8 H119.5 Z" fill="#23aef3"/><circle cx="126.2" cy="350" r="2.2" fill="#23aef3"/><svg x="111" y="251" width="30" height="24.6" viewBox="2.41 3.41 18.12 16.21" preserveAspectRatio="none"><path fill="#f0703a" d="M13.543 3.41c4.114 2.47 6.545 7.162 5.549 11.131-.024.093-.05.181-.076.272l.002.001c2.062 2.538 1.5 5.258 1.236 4.745-1.072-2.086-3.066-1.568-4.088-1.043a6.803 6.803 0 0 1-.281.158l-.02.012-.002.002c-2.115 1.123-4.957 1.205-7.812-.022a12.568 12.568 0 0 1-5.64-4.838c.649.48 1.35.902 2.097 1.252 3.019 1.414 6.051 1.311 8.197-.002C9.651 12.73 7.101 9.67 5.146 7.191a10.628 10.628 0 0 1-1.005-1.384c2.34 2.142 6.038 4.83 7.365 5.576C8.69 8.408 6.208 4.743 6.324 4.86c4.436 4.47 8.528 6.996 8.528 6.996.154.085.27.154.36.213.085-.215.16-.437.224-.668.708-2.588-.09-5.548-1.893-7.992z"/></svg><svg x="111" y="295" width="30" height="24.6" viewBox="2.41 3.41 18.12 16.21" preserveAspectRatio="none"><path fill="#ffffff" d="M13.543 3.41c4.114 2.47 6.545 7.162 5.549 11.131-.024.093-.05.181-.076.272l.002.001c2.062 2.538 1.5 5.258 1.236 4.745-1.072-2.086-3.066-1.568-4.088-1.043a6.803 6.803 0 0 1-.281.158l-.02.012-.002.002c-2.115 1.123-4.957 1.205-7.812-.022a12.568 12.568 0 0 1-5.64-4.838c.649.48 1.35.902 2.097 1.252 3.019 1.414 6.051 1.311 8.197-.002C9.651 12.73 7.101 9.67 5.146 7.191a10.628 10.628 0 0 1-1.005-1.384c2.34 2.142 6.038 4.83 7.365 5.576C8.69 8.408 6.208 4.743 6.324 4.86c4.436 4.47 8.528 6.996 8.528 6.996.154.085.27.154.36.213.085-.215.16-.437.224-.668.708-2.588-.09-5.548-1.893-7.992z"/></svg><g fill="none" stroke="#6e6e6e" stroke-width="2.2" stroke-linecap="round"><line x1="509.5" y1="27" x2="509.5" y2="49.5"/><path d="M509.5 45 Q509.5 37.5 518 37 Q529.5 36.5 529.5 29"/></g><circle cx="509.5" cy="26.3" r="3.2" fill="#6e6e6e"/><circle cx="509.5" cy="50" r="3.2" fill="#6e6e6e"/><circle cx="530" cy="28.4" r="3.2" fill="#6e6e6e"/><rect x="1175.5" y="26.5" width="24" height="24" rx="4.5" fill="#6d6d6d"/><path d="M1186.2 31.5 L1193 45.5 M1188.8 31.5 L1182 45.5 M1179.5 41.8 H1195.5" stroke="#fff" stroke-width="1.7" stroke-linecap="round"/><polyline points="1383.5,32 1388.5,38.5 1383.5,45" fill="none" stroke="#8a8a8a" stroke-width="1.6" stroke-linecap="round" stroke-linejoin="round"/><rect x="1412.8" y="27.5" width="13.6" height="22.5" rx="2.6" fill="#d2d2d2" stroke="#6e6e6e" stroke-width="1.7"/><line x1="1417.5" y1="30.3" x2="1421.7" y2="30.3" stroke="#7a7a7a" stroke-width="1.2" stroke-linecap="round"/><g fill="#6b6b6b"><circle cx="2397.3" cy="42.4" r="6.4"/><circle cx="2401" cy="36.6" r="5.6"/><circle cx="2408.6" cy="37.6" r="9.4"/><circle cx="2415" cy="42.6" r="6.2"/><rect x="2397.3" y="40" width="17.7" height="8.8"/></g><circle cx="2416.2" cy="36.7" r="7.3" fill="#ffffff"/><circle cx="2416.2" cy="36.7" r="4.8" fill="#2d6fea"/><g stroke="#6e6e6e" stroke-width="2.3" stroke-linecap="round"><line x1="2881.5" y1="26.5" x2="2881.5" y2="49.5"/><line x1="2870" y1="38" x2="2893" y2="38"/></g><rect x="2955.8" y="23" width="37" height="28" rx="4.5" fill="none" stroke="#6e6e6e" stroke-width="2.4"/><line x1="2981.5" y1="23.5" x2="2981.5" y2="50.5" stroke="#6e6e6e" stroke-width="2.2"/><line x1="2985.5" y1="29.5" x2="2989.5" y2="29.5" stroke="#6e6e6e" stroke-width="1.4"/><line x1="2985.5" y1="33.8" x2="2989.5" y2="33.8" stroke="#6e6e6e" stroke-width="1.4"/><line x1="2985.5" y1="38" x2="2989.5" y2="38" stroke="#6e6e6e" stroke-width="1.4"/><g fill="none" stroke="#7a7a7a" stroke-width="1.5"><rect x="504.5" y="92.5" width="10" height="10"/><rect x="519.5" y="92.5" width="10" height="10"/><rect x="504.5" y="107.5" width="10" height="10"/><rect x="519.5" y="107.5" width="10" height="10"/></g><g stroke="#7a7a7a" stroke-width="1.5"><line x1="513" y1="97.5" x2="521" y2="97.5"/><line x1="524.5" y1="101" x2="524.5" y2="109"/><line x1="521" y1="112.5" x2="513" y2="112.5"/><line x1="509.5" y1="109" x2="509.5" y2="101"/></g><polyline points="581,92.2 566.5,105.2 581,118.2" fill="none" stroke="#7a7a7a" stroke-width="1.9" stroke-linecap="round" stroke-linejoin="round"/><polyline points="606.5,92.2 621,105.2 606.5,118.2" fill="none" stroke="#7a7a7a" stroke-width="1.9" stroke-linecap="round" stroke-linejoin="round"/><svg x="684.6" y="95.5" width="25.4" height="21" viewBox="2.41 3.41 18.12 16.21" preserveAspectRatio="none"><path fill="#ef7740" d="M13.543 3.41c4.114 2.47 6.545 7.162 5.549 11.131-.024.093-.05.181-.076.272l.002.001c2.062 2.538 1.5 5.258 1.236 4.745-1.072-2.086-3.066-1.568-4.088-1.043a6.803 6.803 0 0 1-.281.158l-.02.012-.002.002c-2.115 1.123-4.957 1.205-7.812-.022a12.568 12.568 0 0 1-5.64-4.838c.649.48 1.35.902 2.097 1.252 3.019 1.414 6.051 1.311 8.197-.002C9.651 12.73 7.101 9.67 5.146 7.191a10.628 10.628 0 0 1-1.005-1.384c2.34 2.142 6.038 4.83 7.365 5.576C8.69 8.408 6.208 4.743 6.324 4.86c4.436 4.47 8.528 6.996 8.528 6.996.154.085.27.154.36.213.085-.215.16-.437.224-.668.708-2.588-.09-5.548-1.893-7.992z"/></svg><svg x="1007.6" y="95.5" width="24.8" height="21" viewBox="2.41 3.41 18.12 16.21" preserveAspectRatio="none"><path fill="#ef7740" d="M13.543 3.41c4.114 2.47 6.545 7.162 5.549 11.131-.024.093-.05.181-.076.272l.002.001c2.062 2.538 1.5 5.258 1.236 4.745-1.072-2.086-3.066-1.568-4.088-1.043a6.803 6.803 0 0 1-.281.158l-.02.012-.002.002c-2.115 1.123-4.957 1.205-7.812-.022a12.568 12.568 0 0 1-5.64-4.838c.649.48 1.35.902 2.097 1.252 3.019 1.414 6.051 1.311 8.197-.002C9.651 12.73 7.101 9.67 5.146 7.191a10.628 10.628 0 0 1-1.005-1.384c2.34 2.142 6.038 4.83 7.365 5.576C8.69 8.408 6.208 4.743 6.324 4.86c4.436 4.47 8.528 6.996 8.528 6.996.154.085.27.154.36.213.085-.215.16-.437.224-.668.708-2.588-.09-5.548-1.893-7.992z"/></svg><path d="M1253 94.5 L1264.8 100.5 L1253 106.5 L1241.2 100.5 Z" fill="#d65a8e"/><path d="M1241.2 105 L1253 111 L1264.8 105 V107.6 L1253 113.6 L1241.2 107.6 Z" fill="#d65a8e"/><path d="M1241.2 110.5 L1253 116.5 L1264.8 110.5 V113 L1253 119 L1241.2 113 Z" fill="#d65a8e"/><g fill="none" stroke="#7a7a7a" stroke-width="1.8" stroke-linecap="round" stroke-linejoin="round"><path d="M2865.5 98.8 H2883.5 M2877 92.8 L2883.5 98.8 L2877 105"/><path d="M2878.5 111 H2860.5 M2867 105 L2860.5 111 L2867 117.2"/></g><g stroke="#7a7a7a" stroke-width="1.6"><line x1="2906" y1="92.9" x2="2918" y2="92.9"/><line x1="2906" y1="98.8" x2="2921.7" y2="98.8"/><line x1="2906" y1="104.9" x2="2918" y2="104.9"/><line x1="2906" y1="111" x2="2921.7" y2="111"/><line x1="2906" y1="117.1" x2="2921.7" y2="117.1"/></g><rect x="2927.3" y="93.2" width="13.4" height="23.8" fill="none" stroke="#7a7a7a" stroke-width="1.6"/><rect x="2931.6" y="97.4" width="4.9" height="15" fill="none" stroke="#7a7a7a" stroke-width="1.5"/><rect x="2981.7" y="93.5" width="23" height="23.2" rx="4" fill="none" stroke="#7a7a7a" stroke-width="1.6"/><line x1="2989" y1="93.5" x2="2989" y2="116.7" stroke="#7a7a7a" stroke-width="1.6"/><g stroke="#7a7a7a" stroke-width="1.6"><line x1="2997" y1="100.2" x2="2997" y2="109.6"/><line x1="2992.3" y1="104.9" x2="3001.7" y2="104.9"/></g><rect x="503.5" y="148" width="24.6" height="24.6" rx="4.2" fill="#3b82f7"/><rect x="505.3" y="149.8" width="21" height="21" rx="3" fill="none" stroke="#b9d4ff" stroke-width="1.1"/><path d="M514.5 153.5 L521.5 166.8 M517.1 153.5 L510.1 166.8 M508 162.8 H523.6" stroke="#fff" stroke-width="1.7" stroke-linecap="round"/><polyline points="711.5,152.5 716.5,160.3 711.5,168" fill="none" stroke="#8c8c8c" stroke-width="1.5" stroke-linecap="round" stroke-linejoin="round"/><path d="M736 153.64655172413794 V150.85862068965517 Q736 149 737.8586206896551 149 H743.6034482758621 Q744.8706896551724 149 745.7155172413793 150.01379310344828 L746.5603448275862 151.02758620689656 H758.6413793103449 Q760.5 151.02758620689656 760.5 152.88620689655173 V153.64655172413794 Z" fill="#868b92"/><rect x="736" y="155.08275862068965" width="24.5" height="15.417241379310344" rx="2.027586206896552" fill="#868b92"/><polyline points="943.0,152.5 948.0,160.3 943.0,168" fill="none" stroke="#8c8c8c" stroke-width="1.5" stroke-linecap="round" stroke-linejoin="round"/><svg x="967" y="150" width="25" height="21" viewBox="2.41 3.41 18.12 16.21" preserveAspectRatio="none"><path fill="#ef7740" d="M13.543 3.41c4.114 2.47 6.545 7.162 5.549 11.131-.024.093-.05.181-.076.272l.002.001c2.062 2.538 1.5 5.258 1.236 4.745-1.072-2.086-3.066-1.568-4.088-1.043a6.803 6.803 0 0 1-.281.158l-.02.012-.002.002c-2.115 1.123-4.957 1.205-7.812-.022a12.568 12.568 0 0 1-5.64-4.838c.649.48 1.35.902 2.097 1.252 3.019 1.414 6.051 1.311 8.197-.002C9.651 12.73 7.101 9.67 5.146 7.191a10.628 10.628 0 0 1-1.005-1.384c2.34 2.142 6.038 4.83 7.365 5.576C8.69 8.408 6.208 4.743 6.324 4.86c4.436 4.47 8.528 6.996 8.528 6.996.154.085.27.154.36.213.085-.215.16-.437.224-.668.708-2.588-.09-5.548-1.893-7.992z"/></svg><polyline points="1128.0,152.5 1133.0,160.3 1128.0,168" fill="none" stroke="#8c8c8c" stroke-width="1.5" stroke-linecap="round" stroke-linejoin="round"/><rect x="1150" y="146" width="27.7" height="27.8" rx="5.5" fill="#3a7ef4"/><g fill="none" stroke="#444" stroke-width="1.8" stroke-linecap="round" stroke-linejoin="round"><path d="M2284.6 225.8 H2300 L2296.2 230.8 V236.3 Q2302.2 239.3 2302.2 244.8 H2282.2 Q2282.2 239.3 2288.4 236.3 V230.8 Z"/><line x1="2292.2" y1="245" x2="2292.2" y2="254"/></g><g fill="none" stroke="#2f7cf6" stroke-width="1.7" stroke-linejoin="round"><rect x="2362.5" y="234" width="21" height="16.3" rx="2.5"/><line x1="2364.5" y1="230.9" x2="2381.5" y2="230.9"/><line x1="2367" y1="227.5" x2="2379" y2="227.5"/></g><path transform="translate(2458,981.2) scale(1.043,1)" d="M0,-12.5 C6,-16 17,-17.5 21.5,-13.5 C24.5,-10.5 18,-6.5 6,-5.5 M4,-14 C4,-8 4,-3 4.5,2" fill="none" stroke="#000" stroke-width="2.55" stroke-linecap="round" stroke-linejoin="round" vector-effect="non-scaling-stroke"/><path transform="translate(2477.5,981.2) scale(1.025,1)" d="M7,-20 C5,-13 2.5,-5 2.5,-1.5 C2.5,0.8 5,0.5 8,-1.5" fill="none" stroke="#000" stroke-width="2.55" stroke-linecap="round" stroke-linejoin="round" vector-effect="non-scaling-stroke"/><path transform="translate(2486.4,981.2) scale(1.018,1)" d="M1,-5.5 C5,-5.5 10,-8 10,-11 C10,-14 5,-14.5 3,-11 C0.5,-7 1,0 6,0 C8,0 10,-1 11,-2.5" fill="none" stroke="#000" stroke-width="2.55" stroke-linecap="round" stroke-linejoin="round" vector-effect="non-scaling-stroke"/><path transform="translate(2498,981.2) scale(1.000,1)" d="M10,-11 C8,-14.5 3,-14 1.2,-9 C0,-4 2,0 5,0 C8,0 10,-6 11,-13 C10.8,-6 11,-2 13,0" fill="none" stroke="#000" stroke-width="2.55" stroke-linecap="round" stroke-linejoin="round" vector-effect="non-scaling-stroke"/><path transform="translate(2514,981.2) scale(1.083,1)" d="M11,-12 C9,-14.5 3,-14.5 2.5,-11 C2,-8 11,-7.5 11,-3.5 C11,1 3,1 0,-1.5" fill="none" stroke="#000" stroke-width="2.55" stroke-linecap="round" stroke-linejoin="round" vector-effect="non-scaling-stroke"/><path transform="translate(2529.5,981.2) scale(0.955,1)" d="M1,-5.5 C5,-5.5 10,-8 10,-11 C10,-14 5,-14.5 3,-11 C0.5,-7 1,0 6,0 C8,0 10,-1 11,-2.5" fill="none" stroke="#000" stroke-width="2.55" stroke-linecap="round" stroke-linejoin="round" vector-effect="non-scaling-stroke"/><path transform="translate(2547,981.2) scale(1.000,1)" d="M2,-13 C3,-6 3,3 3,10 M3,-10 C5,-14 12.5,-15.5 13.5,-9 C14.5,-3 8,0.5 3,-2" fill="none" stroke="#000" stroke-width="2.55" stroke-linecap="round" stroke-linejoin="round" vector-effect="non-scaling-stroke"/><path transform="translate(2564.4,981.2) scale(0.964,1)" d="M1,-13 C2,-8 2,-4 2,0 M2,-9 C4,-13 8,-14.5 11,-12.5" fill="none" stroke="#000" stroke-width="2.55" stroke-linecap="round" stroke-linejoin="round" vector-effect="non-scaling-stroke"/><path transform="translate(2576,981.2) scale(1.154,1)" d="M8,-14 C3,-14 0.5,-9 1,-5 C1.5,-1 6,1 9,-1 C13,-4 13,-13 8,-14" fill="none" stroke="#000" stroke-width="2.55" stroke-linecap="round" stroke-linejoin="round" vector-effect="non-scaling-stroke"/><path transform="translate(2589.7,981.2) scale(0.992,1)" d="M0,-13 C2,-9 4,-4 6,0 C8,-5 10,-10 12,-14" fill="none" stroke="#000" stroke-width="2.55" stroke-linecap="round" stroke-linejoin="round" vector-effect="non-scaling-stroke"/><path transform="translate(2603,981.2) scale(1.071,1)" d="M2.5,-12.5 C2.5,-8 2.5,-4 3,0 M4,-17.5 L7,-21" fill="none" stroke="#000" stroke-width="2.55" stroke-linecap="round" stroke-linejoin="round" vector-effect="non-scaling-stroke"/><path transform="translate(2615,981.2) scale(1.000,1)" d="M11,-9 C9,-14 2,-14 1,-7 C0.2,-2 3,1 6,0 C9,-1 11,-6 12,-10 M14,-22 C12.5,-14 12.5,-6 13.5,0" fill="none" stroke="#000" stroke-width="2.55" stroke-linecap="round" stroke-linejoin="round" vector-effect="non-scaling-stroke"/><path transform="translate(2632,981.2) scale(1.000,1)" d="M1,-5.5 C5,-5.5 10,-8 10,-11 C10,-14 5,-14.5 3,-11 C0.5,-7 1,0 6,0 C8,0 10,-1 11,-2.5" fill="none" stroke="#000" stroke-width="2.55" stroke-linecap="round" stroke-linejoin="round" vector-effect="non-scaling-stroke"/><path transform="translate(2653,981.2) scale(0.962,1)" d="M10,-11 C8,-14.5 3,-14 1.2,-9 C0,-4 2,0 5,0 C8,0 10,-6 11,-13 C10.8,-6 11,-2 13,0" fill="none" stroke="#000" stroke-width="2.55" stroke-linecap="round" stroke-linejoin="round" vector-effect="non-scaling-stroke"/><path transform="translate(2669,981.2) scale(1.429,1)" d="M1,-13 C2,-8 2,-4 2,0 M2,-8 C4,-13 9,-14.5 11,-11 C12,-8 12,-3 13.5,0" fill="none" stroke="#000" stroke-width="2.55" stroke-linecap="round" stroke-linejoin="round" vector-effect="non-scaling-stroke"/><path transform="translate(2697.5,981.2) scale(1.357,1)" d="M2.5,-12.5 C2.5,-8 2.5,-4 3,0 M4,-17.5 L7,-21" fill="none" stroke="#000" stroke-width="2.55" stroke-linecap="round" stroke-linejoin="round" vector-effect="non-scaling-stroke"/><path transform="translate(2708.6,981.2) scale(1.386,1)" d="M1,-13 C2,-8 2,-4 2,0 M2,-8 C4,-13 9,-14.5 11,-11 C12,-8 12,-3 13.5,0" fill="none" stroke="#000" stroke-width="2.55" stroke-linecap="round" stroke-linejoin="round" vector-effect="non-scaling-stroke"/><path transform="translate(2725,981.2) scale(1.000,1)" d="M6,-19.5 C5.5,-12 4.5,-5 5.5,-1 C6.5,1 9.5,0 12,-1.5 M0,-12.5 L15,-13.5" fill="none" stroke="#000" stroke-width="2.55" stroke-linecap="round" stroke-linejoin="round" vector-effect="non-scaling-stroke"/><path transform="translate(2739.8,981.2) scale(1.082,1)" d="M1,-5.5 C5,-5.5 10,-8 10,-11 C10,-14 5,-14.5 3,-11 C0.5,-7 1,0 6,0 C8,0 10,-1 11,-2.5" fill="none" stroke="#000" stroke-width="2.55" stroke-linecap="round" stroke-linejoin="round" vector-effect="non-scaling-stroke"/><path transform="translate(2753,981.2) scale(1.000,1)" d="M11,-11 C9,-14.5 3,-14.5 1.2,-9.5 C0,-5 3,-2 6,-3 C9,-4 11,-8 12,-13 C12,-5 12.5,3 10,7.5 C8,10.5 3,10 0,8" fill="none" stroke="#000" stroke-width="2.55" stroke-linecap="round" stroke-linejoin="round" vector-effect="non-scaling-stroke"/><path transform="translate(2769.6,981.2) scale(1.082,1)" d="M1,-5.5 C5,-5.5 10,-8 10,-11 C10,-14 5,-14.5 3,-11 C0.5,-7 1,0 6,0 C8,0 10,-1 11,-2.5" fill="none" stroke="#000" stroke-width="2.55" stroke-linecap="round" stroke-linejoin="round" vector-effect="non-scaling-stroke"/><path transform="translate(2783,981.2) scale(1.209,1)" d="M1,-13 C2,-8 2,-4 2,0 M2,-9 C4,-13 8,-14.5 11,-12.5" fill="none" stroke="#000" stroke-width="2.55" stroke-linecap="round" stroke-linejoin="round" vector-effect="non-scaling-stroke"/><circle cx="2798.2" cy="980.0" r="1.6" fill="#000"/><circle cx="2292" cy="1781.8" r="13" fill="#2f7cf6"/><path d="M2288 1775 L2298.5 1781.8 L2288 1788.6 Z" fill="#fff" stroke="#fff" stroke-width="1" stroke-linejoin="round"/><rect x="2328" y="1771" width="22.5" height="22.5" rx="2.5" fill="none" stroke="#555" stroke-width="2"/><path d="M2335.5 1775.5 L2344.5 1783.5 L2340 1784 L2342.5 1789 L2340.5 1790 L2338 1785 L2335.5 1788 Z" fill="#555"/><rect x="2380.5" y="1771.0" width="6" height="9" rx="1.5" fill="none" stroke="#555" stroke-width="1.7"/><rect x="2380.5" y="1783.0" width="6" height="9" rx="1.5" fill="none" stroke="#555" stroke-width="1.7"/><rect x="2389.2" y="1771.0" width="6" height="9" rx="1.5" fill="none" stroke="#555" stroke-width="1.7"/><rect x="2389.2" y="1783.0" width="6" height="9" rx="1.5" fill="none" stroke="#555" stroke-width="1.7"/><rect x="2397.9" y="1771.0" width="6" height="9" rx="1.5" fill="none" stroke="#555" stroke-width="1.7"/><rect x="2397.9" y="1783.0" width="6" height="9" rx="1.5" fill="none" stroke="#555" stroke-width="1.7"/><rect x="2463.5" y="1771.5" width="24" height="10" rx="5" fill="none" stroke="#555" stroke-width="1.9"/><circle cx="2469" cy="1776.5" r="2.7" fill="#555"/><rect x="2462.5" y="1784.5" width="26" height="11.5" rx="5.75" fill="#555"/><circle cx="2482.5" cy="1790.2" r="3.2" fill="#fff"/><rect x="2547.5" y="1771" width="13.5" height="22.5" rx="2.8" fill="#d5d5d5" stroke="#555" stroke-width="1.8"/><line x1="2552" y1="1774" x2="2556.5" y2="1774" stroke="#555" stroke-width="1.1"/><circle cx="2821.4" cy="1779.3" r="9.1" fill="none" stroke="#444" stroke-width="2.6"/><line x1="2828.0" y1="1785.8999999999999" x2="2834.4" y2="1792.3" stroke="#444" stroke-width="3.1" stroke-linecap="round"/><line x1="2817.1" y1="1779.3" x2="2825.7000000000003" y2="1779.3" stroke="#444" stroke-width="2"/><circle cx="2869.4" cy="1779.3" r="9.1" fill="none" stroke="#444" stroke-width="2.6"/><line x1="2876.0" y1="1785.8999999999999" x2="2882.4" y2="1792.3" stroke="#444" stroke-width="3.1" stroke-linecap="round"/><path d="M2866.6 1776.5 L2869.8 1774.1 V1783.6" fill="none" stroke="#444" stroke-width="1.8" stroke-linejoin="round"/><circle cx="2917.3" cy="1779.3" r="9.1" fill="none" stroke="#444" stroke-width="2.6"/><line x1="2923.9" y1="1785.8999999999999" x2="2930.3" y2="1792.3" stroke="#444" stroke-width="3.1" stroke-linecap="round"/><rect x="2913.4" y="1775.3999999999999" width="7.8" height="7.8" rx="1.2" fill="none" stroke="#444" stroke-width="2.2"/><circle cx="2965.5" cy="1779.3" r="9.1" fill="none" stroke="#444" stroke-width="2.6"/><line x1="2972.1" y1="1785.8999999999999" x2="2978.5" y2="1792.3" stroke="#444" stroke-width="3.1" stroke-linecap="round"/><g stroke="#444" stroke-width="2"><line x1="2961.2" y1="1779.3" x2="2969.8" y2="1779.3"/><line x1="2965.5" y1="1775.0" x2="2965.5" y2="1783.6"/></g><g stroke="#444" stroke-width="2.4" stroke-linecap="round"><line x1="34.4" y1="1850" x2="34.4" y2="1871"/><line x1="24" y1="1860.5" x2="45" y2="1860.5"/></g><rect x="66" y="1848" width="50" height="24" rx="12" fill="none" stroke="#7a7a7a" stroke-width="1.6"/><g stroke="#7a7a7a" stroke-width="1.5" stroke-linecap="round"><line x1="74" y1="1855.5" x2="86" y2="1855.5"/><line x1="76" y1="1860" x2="84" y2="1860"/><line x1="78" y1="1864.5" x2="82" y2="1864.5"/></g><polyline points="97,1857.5 101.5,1862 106,1857.5" fill="none" stroke="#7a7a7a" stroke-width="1.6" stroke-linecap="round" stroke-linejoin="round"/><circle cx="414.5" cy="1860" r="12" fill="none" stroke="#6f6f6f" stroke-width="1.7"/><polyline points="414.5,1852 414.5,1860.5 408.5,1860.5" fill="none" stroke="#6f6f6f" stroke-width="1.7"/><rect x="436.5" y="1848" width="25" height="24" rx="2" fill="none" stroke="#6f6f6f" stroke-width="1.7"/><g stroke="#6f6f6f" stroke-width="1.6"><line x1="440.5" y1="1860" x2="447.5" y2="1860"/><line x1="444" y1="1856.5" x2="444" y2="1863.5"/><line x1="451" y1="1860" x2="458" y2="1860"/></g><path d="M511.5 1852 H531 Q533.5 1852 535 1854.5 L538.5 1861 L535 1867.5 Q533.5 1870 531 1870 H511.5 Q508.8 1870 508.8 1867.3 V1854.7 Q508.8 1852 511.5 1852 Z" fill="#3478f6"/><g fill="none" stroke="#6b6b6b" stroke-width="1.7"><rect x="577" y="1849" width="5" height="24" rx="2.5"/><rect x="589" y="1849" width="5" height="24" rx="2.5"/></g><g fill="none" stroke="#b9b9b9" stroke-width="1.6" stroke-linecap="round" stroke-linejoin="round"><path d="M634 1866 L646 1853 L655 1862 M648 1863 H655 V1856"/><rect x="637.5" y="1868" width="17" height="4.5"/></g><g fill="none" stroke="#b9b9b9" stroke-width="1.6" stroke-linecap="round" stroke-linejoin="round"><path d="M706 1848.5 V1864 M699.5 1857.5 L706 1864 L712.5 1857.5"/><rect x="697.5" y="1868" width="17" height="4.5"/></g><g fill="none" stroke="#b9b9b9" stroke-width="1.6" stroke-linecap="round" stroke-linejoin="round"><path d="M766 1864 V1848.5 M759.5 1855 L766 1848.5 L772.5 1855"/><rect x="757.5" y="1868" width="17" height="4.5"/></g><g fill="none" stroke="#6b6b6b" stroke-width="1.6" stroke-linejoin="round"><path d="M817 1858 L827 1851.5 L839 1855.5 V1866.5 L829 1873 L817 1869 Z"/><path d="M820 1856 L830 1849.5"/><path d="M829 1873 V1862 L839 1855.5 M829 1862 L817 1858"/></g><g fill="none" stroke="#6b6b6b" stroke-width="1.7"><circle cx="879.5" cy="1851.5" r="4"/><circle cx="896.5" cy="1860" r="4"/><circle cx="879.5" cy="1868.5" r="4"/><line x1="883" y1="1853.5" x2="892.8" y2="1858.3"/><line x1="883" y1="1866.5" x2="892.8" y2="1861.7"/></g><rect x="937.5" y="1849" width="21" height="10.5" rx="5.25" fill="none" stroke="#6b6b6b" stroke-width="1.7"/><circle cx="943" cy="1854.2" r="2.6" fill="#6b6b6b"/><rect x="937.5" y="1862" width="21" height="11" rx="5.5" fill="none" stroke="#6b6b6b" stroke-width="1.7"/><circle cx="953" cy="1867.5" r="2.8" fill="#6b6b6b"/><path d="M997 1859.5 L1019.5 1849.5 L1009.5 1872 L1007.5 1861.5 Z" fill="none" stroke="#6b6b6b" stroke-width="1.7" stroke-linejoin="round"/><rect x="1057.5" y="1848" width="24" height="24" rx="4.5" fill="#6d6d6d"/><path d="M1068.2 1853 L1075 1867 M1070.8 1853 L1064 1867 M1061.5 1863.3 H1077.5" stroke="#fff" stroke-width="1.7" stroke-linecap="round"/><rect x="2973.5" y="1849.5" width="25.5" height="24" rx="3.5" fill="none" stroke="#6b6b6b" stroke-width="1.7"/><rect x="2977" y="1864.5" width="18.5" height="5.5" rx="1" fill="#6b6b6b"/></svg>
<div class="t" style="top:149.45px;font-family:'Liberation Sans', sans-serif;font-size:23px;line-height:23px;color:#ffffff;font-weight:400;font-style:normal;left:163.85px;width:2000px;text-align:center;">M</div>
<div class="r" style="left:0px;top:0px;width:22px;height:22px;background:radial-gradient(circle at 100% 100%, rgba(255,255,255,0) 20px, #fff 21.5px);border-radius:0px;"></div>
<div class="r" style="left:0px;top:0px;width:14px;height:1.5px;background:#000;border-radius:0px;"></div>
<div class="r" style="left:0px;top:1866px;width:22px;height:22px;background:radial-gradient(circle at 100% 0%, rgba(255,255,255,0) 20px, #fff 21.5px);border-radius:0px;"></div>
</div></body></html>
